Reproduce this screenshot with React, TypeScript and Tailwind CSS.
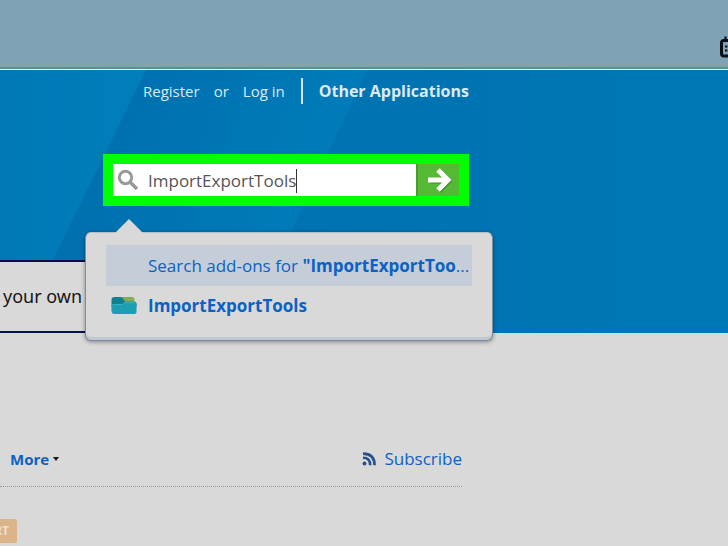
const suggestions = [
  { id: "search", icon: false },
  { id: "addon", icon: true },
];

function SearchIcon() {
  return (
    <svg viewBox="0 0 22 22" className="h-[22px] w-[22px] shrink-0" fill="none" stroke="#999999">
      <circle cx="8.5" cy="8.5" r="6.2" strokeWidth="3" />
      <path d="M13 13l7 7" strokeWidth="3.6" />
    </svg>
  );
}

function ArrowIcon() {
  return (
    <svg viewBox="0 0 26 26" className="h-[26px] w-[26px]" fill="none">
      <path d="M3 13h19M12 3l10 10-10 10" stroke="#3d8f27" strokeWidth="5" transform="translate(1 1)" />
      <path d="M2 13h20M12 3l10 10-10 10" stroke="#ffffff" strokeWidth="5" />
    </svg>
  );
}

function FolderIcon() {
  return (
    <svg viewBox="0 0 26 20" className="h-[20px] w-[26px]">
      <path d="M10 1h11q2.500 0 2.500 3v5H10z" fill="#7fae57" />
      <path d="M13 5h11v4H13z" fill="#a0bd5c" />
      <path d="M0.500 4q0-3 3-3h6q1.500 0 2.500 1.500l2 3h9q2.500 0 2.500 2.500v3h-25z" fill="#12808f" />
      <path d="M0.500 10q0-2 2-2h9l2-2h10q2 0 2 2v8q0 2-3 2h-19q-3 0-3-3z" fill="#1c9fb2" />
      <path d="M1.500 9.500q0-1 1.500-1h8.500l2-1.700h10.500" fill="none" stroke="#35b3c0" />
    </svg>
  );
}

function RssIcon() {
  return (
    <svg viewBox="0 0 14 14" className="h-[14px] w-[14px]" fill="none" stroke="#274f8d">
      <circle cx="2.500" cy="11.500" r="1.900" fill="#274f8d" stroke="none" />
      <path d="M1 5.700q7.200 0 7.200 7.600" strokeWidth="2.600" />
      <path d="M1 1.600q11.600 0 11.600 11.700" strokeWidth="2.600" />
    </svg>
  );
}

function CalendarIcon() {
  return (
    <svg viewBox="0 0 20 22" className="h-[22px] w-[20px]" fill="none" stroke="#0a0f14">
      <rect x="1.500" y="4.500" width="17" height="15.500" rx="2.500" strokeWidth="3" />
      <path d="M5.500 0.500v5M14.500 0.500v5" strokeWidth="2.200" />
      <path d="M5 10.500h10M5 14.500h10" strokeWidth="2.200" strokeDasharray="2.400 1.400" />
    </svg>
  );
}

function HeroBackdrop() {
  return (
    <svg className="absolute inset-0 h-full w-full" viewBox="0 0 728 263" preserveAspectRatio="none">
      <defs>
        <linearGradient id="left" x1="0" x2="1">
          <stop offset="0" stopColor="#0078b6" />
          <stop offset="1" stopColor="#007fbc" />
        </linearGradient>
        <linearGradient id="middle" gradientUnits="userSpaceOnUse" x1="110" y1="60" x2="330" y2="140">
          <stop offset="0" stopColor="#0070af" />
          <stop offset="1" stopColor="#007cba" />
        </linearGradient>
        <linearGradient id="right" x1="0" x2="1">
          <stop offset="0" stopColor="#0070af" />
          <stop offset="1" stopColor="#0077b5" />
        </linearGradient>
      </defs>
      <path d="M0 0h728v263H0z" fill="url(#right)" />
      <path d="M0 0h367L243 263H0z" fill="url(#middle)" />
      <path d="M0 0h146L38 220 17 263H0z" fill="url(#left)" />
    </svg>
  );
}

export default function App() {
  return (
    <div className="min-h-screen overflow-hidden bg-[#d9d9d9] font-['Open_Sans','Noto_Sans',sans-serif] text-[#0b62c4]">
      <header className="flex h-[70px] items-end justify-end border-b border-[#e6f4fa] bg-[#80a2b5]">
        <div className="flex h-full w-full items-center justify-end border-b-2 border-[#66899a] pt-[26px]">
          <button aria-label="Calendar" className="-mr-3">
            <CalendarIcon />
          </button>
        </div>
      </header>

      <section className="relative">
        <HeroBackdrop />
        <div className="relative pt-2">
          <nav className="ml-[143px] flex h-[26px] items-center text-[15px] text-[#dceaf2]">
            <a href="#register">Register</a>
            <span className="mx-[14px]">or</span>
            <a href="#login">Log in</a>
            <span className="mx-4 h-[26px] w-[2px] bg-[#d7e6ee]" />
            <a href="#apps" className="text-[16px] font-bold">
              Other Applications
            </a>
          </nav>

          <div className="relative mt-[50px] ml-[103px] w-[366px]">
            <form className="flex h-[52px] border-10 border-[#00ff00]" onSubmit={(e) => e.preventDefault()}>
              <label htmlFor="search" className="flex w-[35px] items-center bg-white pl-1">
                <SearchIcon />
              </label>
              <div className="flex min-w-0 flex-1 items-center bg-white pt-[2px]">
                <input
                  id="search"
                  aria-label="Search"
                  defaultValue="ImportExportTools"
                  className="field-sizing-content bg-white text-[17px] text-[#555555] outline-none"
                />
                <span className="h-6 w-px bg-[#333333]" />
              </div>
              <button
                aria-label="Go"
                className="flex w-[43px] items-center justify-center border-l-2 border-[#469a2f] bg-[#55b936]"
              >
                <ArrowIcon />
              </button>
            </form>

            <div className="absolute top-[78px] -left-[18px] z-10 w-[408px] rounded-md border border-[#7c8da0] border-t-[#b4bfca] bg-[#d9d9d9] px-5 pt-3 pb-[14px] shadow-[inset_0_-3px_0_#c0c6d2,0_1px_4px_rgba(0,0,0,0.4)]">
              <svg viewBox="0 0 28 14" className="absolute -top-[14px] left-[29px] h-[14px] w-[28px]">
                <path d="M0 14L14 0l14 14z" fill="#d9d9d9" />
              </svg>
              <ul className="text-[17px]">
                {suggestions.map((item) => (
                  <li key={item.id}>
                    {item.icon ? (
                      <a href="#addon" className="flex h-10 items-center font-bold">
                        <span className="flex w-[42px] pl-[5px]">
                          <FolderIcon />
                        </span>
                        ImportExportTools
                      </a>
                    ) : (
                      <a href="#results" className="block h-[41px] bg-[#c5cdd9] pl-[42px] leading-[41px] whitespace-nowrap">
                        Search add-ons for <b>&quot;ImportExportToo</b>...
                      </a>
                    )}
                  </li>
                ))}
              </ul>
            </div>
          </div>

          <div className="mt-[54px] flex h-[73px] w-[300px] items-center border-y-2 border-[#071044] bg-[#d9d9d9] pl-[3px] font-['Noto_Sans',sans-serif] text-[18px] text-[#151515]">
            your own
          </div>
        </div>
      </section>

      <main className="pt-28">
        <div className="flex h-[42px] max-w-[462px] items-start justify-between border-b border-dotted border-[#7f9cc8] pl-[10px]">
          <button className="flex h-7 items-center gap-1 text-[15px] font-bold">
            More
            <svg viewBox="0 0 6 4" className="h-1 w-[6px]">
              <path d="M0 0h6L3 4z" fill="#151515" />
            </svg>
          </button>
          <a href="#subscribe" className="flex h-7 items-center gap-2 text-[17px]">
            <RssIcon />
            Subscribe
          </a>
        </div>
        <div className="mt-8 flex h-6 w-[17px] items-center justify-end rounded-r-xs bg-[#dcb48a] pr-2 text-[12px] font-bold text-[#ece0d2]">
          RT
        </div>
      </main>
    </div>
  );
}
